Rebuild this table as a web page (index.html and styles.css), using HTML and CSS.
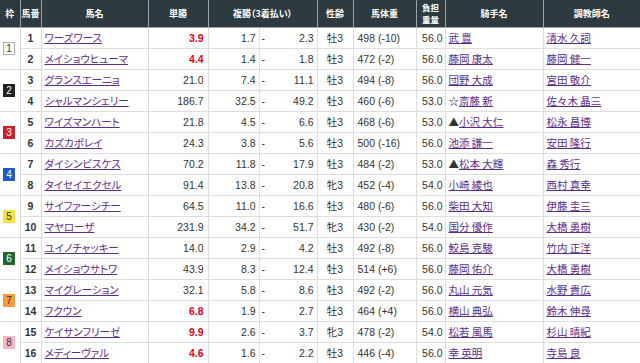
FILE: index.html
```html
<!DOCTYPE html>
<html lang="ja">
<head>
    <meta charset="UTF-8">
    <meta name="viewport" content="width=device-width, initial-scale=1.0">
    <title>出馬表</title>
    <link rel="stylesheet" href="styles.css">
</head>
<body>
    <table class="race-table">
        <colgroup>
            <col class="c-waku">
            <col class="c-umaban">
            <col class="c-name">
            <col class="c-win">
            <col class="c-place-low">
            <col class="c-place-sep">
            <col class="c-place-high">
            <col class="c-sex">
            <col class="c-weight">
            <col class="c-load">
            <col class="c-jockey">
            <col class="c-trainer">
        </colgroup>
        <thead>
            <tr>
                <th>枠</th>
                <th>馬番</th>
                <th>馬名</th>
                <th>単勝</th>
                <th colspan="3">複勝（3着払い）</th>
                <th>性齢</th>
                <th>馬体重</th>
                <th class="two-line">負担<br>重量</th>
                <th>騎手名</th>
                <th>調教師名</th>
            </tr>
        </thead>
        <tbody>
            <tr class="frame-top">
                <td class="waku" rowspan="2"><span class="badge w1">1</span></td>
                <td class="umaban">1</td>
                <td class="name"><a href="#">ワーズワース</a></td>
                <td class="win hot">3.9</td>
                <td class="place-low">1.7</td><td class="place-sep">-</td><td class="place-high">2.3</td>
                <td class="sex">牡3</td>
                <td class="weight">498 (-10)</td>
                <td class="load">56.0</td>
                <td class="person"><a href="#">武 豊</a></td>
                <td class="person"><a href="#">清水 久詞</a></td>
            </tr>
            <tr>
                <td class="umaban">2</td>
                <td class="name"><a href="#">メイショウヒューマ</a></td>
                <td class="win hot">4.4</td>
                <td class="place-low">1.4</td><td class="place-sep">-</td><td class="place-high">1.8</td>
                <td class="sex">牡3</td>
                <td class="weight">472 (-2)</td>
                <td class="load">56.0</td>
                <td class="person"><a href="#">藤岡 康太</a></td>
                <td class="person"><a href="#">藤岡 健一</a></td>
            </tr>
            <tr class="frame-top">
                <td class="waku" rowspan="2"><span class="badge w2">2</span></td>
                <td class="umaban">3</td>
                <td class="name"><a href="#">グランスエーニョ</a></td>
                <td class="win">21.0</td>
                <td class="place-low">7.4</td><td class="place-sep">-</td><td class="place-high">11.1</td>
                <td class="sex">牡3</td>
                <td class="weight">494 (-8)</td>
                <td class="load">56.0</td>
                <td class="person"><a href="#">団野 大成</a></td>
                <td class="person"><a href="#">宮田 敬介</a></td>
            </tr>
            <tr>
                <td class="umaban">4</td>
                <td class="name"><a href="#">シャルマンシェリー</a></td>
                <td class="win">186.7</td>
                <td class="place-low">32.5</td><td class="place-sep">-</td><td class="place-high">49.2</td>
                <td class="sex">牡3</td>
                <td class="weight">460 (-6)</td>
                <td class="load">53.0</td>
                <td class="person">☆<a href="#">斎藤 新</a></td>
                <td class="person"><a href="#">佐々木 晶三</a></td>
            </tr>
            <tr class="frame-top">
                <td class="waku" rowspan="2"><span class="badge w3">3</span></td>
                <td class="umaban">5</td>
                <td class="name"><a href="#">ワイズマンハート</a></td>
                <td class="win">21.8</td>
                <td class="place-low">4.5</td><td class="place-sep">-</td><td class="place-high">6.6</td>
                <td class="sex">牡3</td>
                <td class="weight">468 (-6)</td>
                <td class="load">53.0</td>
                <td class="person">▲<a href="#">小沢 大仁</a></td>
                <td class="person"><a href="#">松永 昌博</a></td>
            </tr>
            <tr>
                <td class="umaban">6</td>
                <td class="name"><a href="#">カズカポレイ</a></td>
                <td class="win">24.3</td>
                <td class="place-low">3.8</td><td class="place-sep">-</td><td class="place-high">5.6</td>
                <td class="sex">牡3</td>
                <td class="weight">500 (-16)</td>
                <td class="load">56.0</td>
                <td class="person"><a href="#">池添 謙一</a></td>
                <td class="person"><a href="#">安田 隆行</a></td>
            </tr>
            <tr class="frame-top">
                <td class="waku" rowspan="2"><span class="badge w4">4</span></td>
                <td class="umaban">7</td>
                <td class="name"><a href="#">ダイシンビスケス</a></td>
                <td class="win">70.2</td>
                <td class="place-low">11.8</td><td class="place-sep">-</td><td class="place-high">17.9</td>
                <td class="sex">牡3</td>
                <td class="weight">484 (-2)</td>
                <td class="load">53.0</td>
                <td class="person">▲<a href="#">松本 大輝</a></td>
                <td class="person"><a href="#">森 秀行</a></td>
            </tr>
            <tr>
                <td class="umaban">8</td>
                <td class="name"><a href="#">タイセイエクセル</a></td>
                <td class="win">91.4</td>
                <td class="place-low">13.8</td><td class="place-sep">-</td><td class="place-high">20.8</td>
                <td class="sex">牝3</td>
                <td class="weight">452 (-4)</td>
                <td class="load">54.0</td>
                <td class="person"><a href="#">小崎 綾也</a></td>
                <td class="person"><a href="#">西村 真幸</a></td>
            </tr>
            <tr class="frame-top">
                <td class="waku" rowspan="2"><span class="badge w5">5</span></td>
                <td class="umaban">9</td>
                <td class="name"><a href="#">サイファーシチー</a></td>
                <td class="win">64.5</td>
                <td class="place-low">11.0</td><td class="place-sep">-</td><td class="place-high">16.6</td>
                <td class="sex">牡3</td>
                <td class="weight">480 (-6)</td>
                <td class="load">56.0</td>
                <td class="person"><a href="#">柴田 大知</a></td>
                <td class="person"><a href="#">伊藤 圭三</a></td>
            </tr>
            <tr>
                <td class="umaban">10</td>
                <td class="name"><a href="#">マヤローザ</a></td>
                <td class="win">231.9</td>
                <td class="place-low">34.2</td><td class="place-sep">-</td><td class="place-high">51.7</td>
                <td class="sex">牝3</td>
                <td class="weight">430 (-2)</td>
                <td class="load">54.0</td>
                <td class="person"><a href="#">国分 優作</a></td>
                <td class="person"><a href="#">大橋 勇樹</a></td>
            </tr>
            <tr class="frame-top">
                <td class="waku" rowspan="2"><span class="badge w6">6</span></td>
                <td class="umaban">11</td>
                <td class="name"><a href="#">ユイノチャッキー</a></td>
                <td class="win">14.0</td>
                <td class="place-low">2.9</td><td class="place-sep">-</td><td class="place-high">4.2</td>
                <td class="sex">牡3</td>
                <td class="weight">492 (-8)</td>
                <td class="load">56.0</td>
                <td class="person"><a href="#">鮫島 克駿</a></td>
                <td class="person"><a href="#">竹内 正洋</a></td>
            </tr>
            <tr>
                <td class="umaban">12</td>
                <td class="name"><a href="#">メイショウサトワ</a></td>
                <td class="win">43.9</td>
                <td class="place-low">8.3</td><td class="place-sep">-</td><td class="place-high">12.4</td>
                <td class="sex">牡3</td>
                <td class="weight">514 (+6)</td>
                <td class="load">56.0</td>
                <td class="person"><a href="#">藤岡 佑介</a></td>
                <td class="person"><a href="#">大橋 勇樹</a></td>
            </tr>
            <tr class="frame-top">
                <td class="waku" rowspan="2"><span class="badge w7">7</span></td>
                <td class="umaban">13</td>
                <td class="name"><a href="#">マイグレーション</a></td>
                <td class="win">32.1</td>
                <td class="place-low">5.8</td><td class="place-sep">-</td><td class="place-high">8.6</td>
                <td class="sex">牡3</td>
                <td class="weight">492 (-2)</td>
                <td class="load">56.0</td>
                <td class="person"><a href="#">丸山 元気</a></td>
                <td class="person"><a href="#">水野 貴広</a></td>
            </tr>
            <tr>
                <td class="umaban">14</td>
                <td class="name"><a href="#">フクウン</a></td>
                <td class="win hot">6.8</td>
                <td class="place-low">1.9</td><td class="place-sep">-</td><td class="place-high">2.7</td>
                <td class="sex">牡3</td>
                <td class="weight">464 (+4)</td>
                <td class="load">56.0</td>
                <td class="person"><a href="#">横山 典弘</a></td>
                <td class="person"><a href="#">鈴木 伸尋</a></td>
            </tr>
            <tr class="frame-top">
                <td class="waku" rowspan="2"><span class="badge w8">8</span></td>
                <td class="umaban">15</td>
                <td class="name"><a href="#">ケイサンフリーゼ</a></td>
                <td class="win hot">9.9</td>
                <td class="place-low">2.6</td><td class="place-sep">-</td><td class="place-high">3.7</td>
                <td class="sex">牝3</td>
                <td class="weight">478 (-2)</td>
                <td class="load">54.0</td>
                <td class="person"><a href="#">松若 風馬</a></td>
                <td class="person"><a href="#">杉山 晴紀</a></td>
            </tr>
            <tr>
                <td class="umaban">16</td>
                <td class="name"><a href="#">メディーヴァル</a></td>
                <td class="win hot">4.6</td>
                <td class="place-low">1.6</td><td class="place-sep">-</td><td class="place-high">2.2</td>
                <td class="sex">牡3</td>
                <td class="weight">446 (-4)</td>
                <td class="load">56.0</td>
                <td class="person"><a href="#">幸 英明</a></td>
                <td class="person"><a href="#">寺島 良</a></td>
            </tr>
        </tbody>
    </table>
</body>
</html>
```

FILE: styles.css
```css
* {
    margin: 0;
    padding: 0;
    box-sizing: border-box;
}

body {
    font-family: "Liberation Sans", "Noto Sans CJK JP", sans-serif;
    color: #333;
    background: #fff;
    width: 640px;
}

.race-table {
    width: 640px;
    table-layout: fixed;
    border-collapse: collapse;
}

.c-waku { width: 20px; }
.c-umaban { width: 21px; }
.c-name { width: 107px; }
.c-win { width: 60px; }
.c-place-low { width: 51px; }
.c-place-sep { width: 8px; }
.c-place-high { width: 50px; }
.c-sex { width: 36px; }
.c-weight { width: 63px; }
.c-load { width: 29px; }
.c-jockey { width: 98px; }
.c-trainer { width: 97px; }

/* header */
.race-table th {
    height: 27px;
    background: #2d3b41;
    color: #fff;
    font-family: "Noto Sans CJK JP", sans-serif;
    font-size: 9px;
    font-weight: 700;
    line-height: 13px;
    text-align: center;
    border: 1px solid #9aa3a7;
    border-top: none;
    white-space: nowrap;
    overflow: hidden;
    font-feature-settings: "palt";
}

.race-table th:first-child { border-left: none; }
.race-table th:last-child { border-right: none; }

.race-table th.two-line {
    font-size: 8.5px;
    line-height: 12px;
}

/* body */
.race-table td {
    height: 21px;
    border: 1px solid #ddd;
    font-size: 10.5px;
    line-height: 12px;
    white-space: nowrap;
    overflow: hidden;
    vertical-align: middle;
}

.race-table td:last-child { border-right: none; }
.race-table tbody tr:last-child td { border-bottom: none; }

.race-table a {
    color: #5a2d8c;
    text-decoration: underline;
}

.waku {
    padding-left: 3px;
    border-left: none !important;
}

.badge {
    display: block;
    width: 12px;
    height: 13px;
    font-size: 10px;
    line-height: 13px;
    text-align: center;
    color: #fff;
}

.w1 { background: #fff; color: #333; border: 1px solid #aaa; line-height: 11px; }
.w2 { background: #222; }
.w3 { background: #cf1f2a; }
.w4 { background: #1c5cc4; }
.w5 { background: #f6e43c; color: #333; }
.w6 { background: #1e6a2e; }
.w7 { background: #f89b3d; color: #333; }
.w8 { background: #f6b6c9; color: #333; }

.umaban {
    text-align: center;
    font-weight: 700;
    font-size: 10.5px;
}

.name {
    padding-left: 3px;
    font-family: "Noto Sans CJK JP", sans-serif;
    font-size: 10px;
    font-feature-settings: "palt";
}

.win {
    text-align: right;
    padding-right: 4px;
    font-size: 11px;
}

.win.hot {
    color: #e2001b;
    font-weight: 700;
}

.place-low {
    text-align: right;
    padding-right: 3px;
    border-right: 1px dotted #ccc !important;
}

.place-sep {
    text-align: center;
    font-size: 9px;
    border-left: 1px dotted #ccc !important;
    border-right: none !important;
}

.place-high {
    text-align: right;
    padding-right: 3px;
    border-left: none !important;
}

.sex {
    text-align: center;
    font-size: 10px;
}

.weight {
    padding-left: 4px;
    font-size: 10px;
}

.load {
    text-align: right;
    padding-right: 2px;
}

.person {
    padding-left: 3px;
    font-family: "Noto Sans CJK JP", sans-serif;
    font-size: 9.5px;
}
```
